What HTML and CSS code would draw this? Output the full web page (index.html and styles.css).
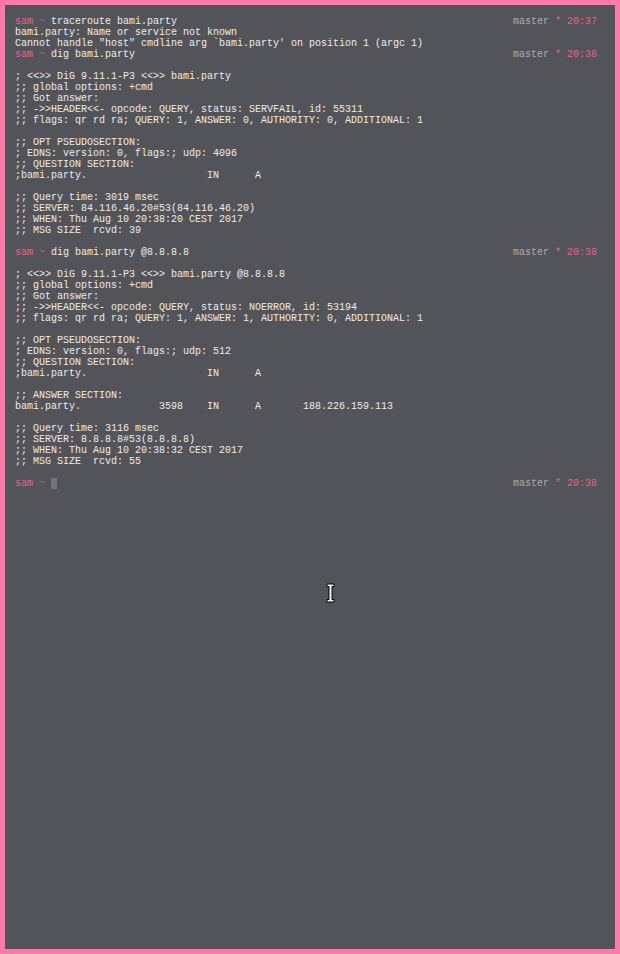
FILE: index.html
```html
<!DOCTYPE html>
<html>
<head>
    <title>sam@terminal</title>
    <link rel="stylesheet" href="styles.css">
</head>
<body>
    <div id="terminal">
        <div class="prompt-line">
            <span><span class="user">sam</span> <span class="tilde">~</span> traceroute bami.party</span>
            <span class="status"><span class="branch">master</span> <span class="dirty">*</span> <span class="time">20:37</span></span>
        </div>
<pre class="output">bami.party: Name or service not known
Cannot handle "host" cmdline arg `bami.party' on position 1 (argc 1)</pre>
        <div class="prompt-line">
            <span><span class="user">sam</span> <span class="tilde">~</span> dig bami.party</span>
            <span class="status"><span class="branch">master</span> <span class="dirty">*</span> <span class="time">20:38</span></span>
        </div>
        <div class="blank"></div>
<pre class="output">; &lt;&lt;&gt;&gt; DiG 9.11.1-P3 &lt;&lt;&gt;&gt; bami.party
;; global options: +cmd
;; Got answer:
;; -&gt;&gt;HEADER&lt;&lt;- opcode: QUERY, status: SERVFAIL, id: 55311
;; flags: qr rd ra; QUERY: 1, ANSWER: 0, AUTHORITY: 0, ADDITIONAL: 1

;; OPT PSEUDOSECTION:
; EDNS: version: 0, flags:; udp: 4096
;; QUESTION SECTION:
;bami.party.			IN	A

;; Query time: 3019 msec
;; SERVER: 84.116.46.20#53(84.116.46.20)
;; WHEN: Thu Aug 10 20:38:20 CEST 2017
;; MSG SIZE  rcvd: 39</pre>
        <div class="blank"></div>
        <div class="prompt-line">
            <span><span class="user">sam</span> <span class="tilde">~</span> dig bami.party @8.8.8.8</span>
            <span class="status"><span class="branch">master</span> <span class="dirty">*</span> <span class="time">20:38</span></span>
        </div>
        <div class="blank"></div>
<pre class="output">; &lt;&lt;&gt;&gt; DiG 9.11.1-P3 &lt;&lt;&gt;&gt; bami.party @8.8.8.8
;; global options: +cmd
;; Got answer:
;; -&gt;&gt;HEADER&lt;&lt;- opcode: QUERY, status: NOERROR, id: 53194
;; flags: qr rd ra; QUERY: 1, ANSWER: 1, AUTHORITY: 0, ADDITIONAL: 1

;; OPT PSEUDOSECTION:
; EDNS: version: 0, flags:; udp: 512
;; QUESTION SECTION:
;bami.party.			IN	A

;; ANSWER SECTION:
bami.party.		3598	IN	A	188.226.159.113

;; Query time: 3116 msec
;; SERVER: 8.8.8.8#53(8.8.8.8)
;; WHEN: Thu Aug 10 20:38:32 CEST 2017
;; MSG SIZE  rcvd: 55</pre>
        <div class="blank"></div>
        <div class="prompt-line">
            <span><span class="user">sam</span> <span class="tilde">~</span> <span class="cursor"></span></span>
            <span class="status"><span class="branch">master</span> <span class="dirty">*</span> <span class="time">20:38</span></span>
        </div>

        <svg class="ibeam" width="9" height="20" viewBox="0 0 9 20">
            <path d="M1 1h7v2.5h-2v13h2v2.5h-7v-2.5h2v-13h-2z" fill="#fff" stroke="#000" stroke-width="1"/>
        </svg>
    </div>
</body>
</html>
```

FILE: styles.css
```css
html, body {
    margin: 0;
    height: 100%;
}

body {
    background: #ff7aa9;
    padding: 5px;
    box-sizing: border-box;
}

#terminal {
    position: relative;
    height: 100%;
    box-sizing: border-box;
    background: #535459;
    padding: 11px 18px 10px 10px;
    font-family: "Liberation Mono", monospace;
    font-size: 10px;
    line-height: 11px;
    color: #ececec;
}

.output {
    margin: 0;
    font: inherit;
    white-space: pre;
    tab-size: 8;
}

.blank {
    height: 11px;
}

.prompt-line {
    display: flex;
    justify-content: space-between;
    white-space: pre;
}

.user {
    color: #de6797;
}

.tilde {
    color: #b4607f;
}

.branch {
    color: #a9acb6;
}

.dirty,
.time {
    color: #e2648f;
}

.cursor {
    display: inline-block;
    width: 6px;
    height: 11px;
    background: #6e7586;
    vertical-align: top;
}

.ibeam {
    position: absolute;
    left: 321px;
    top: 578px;
}
```
